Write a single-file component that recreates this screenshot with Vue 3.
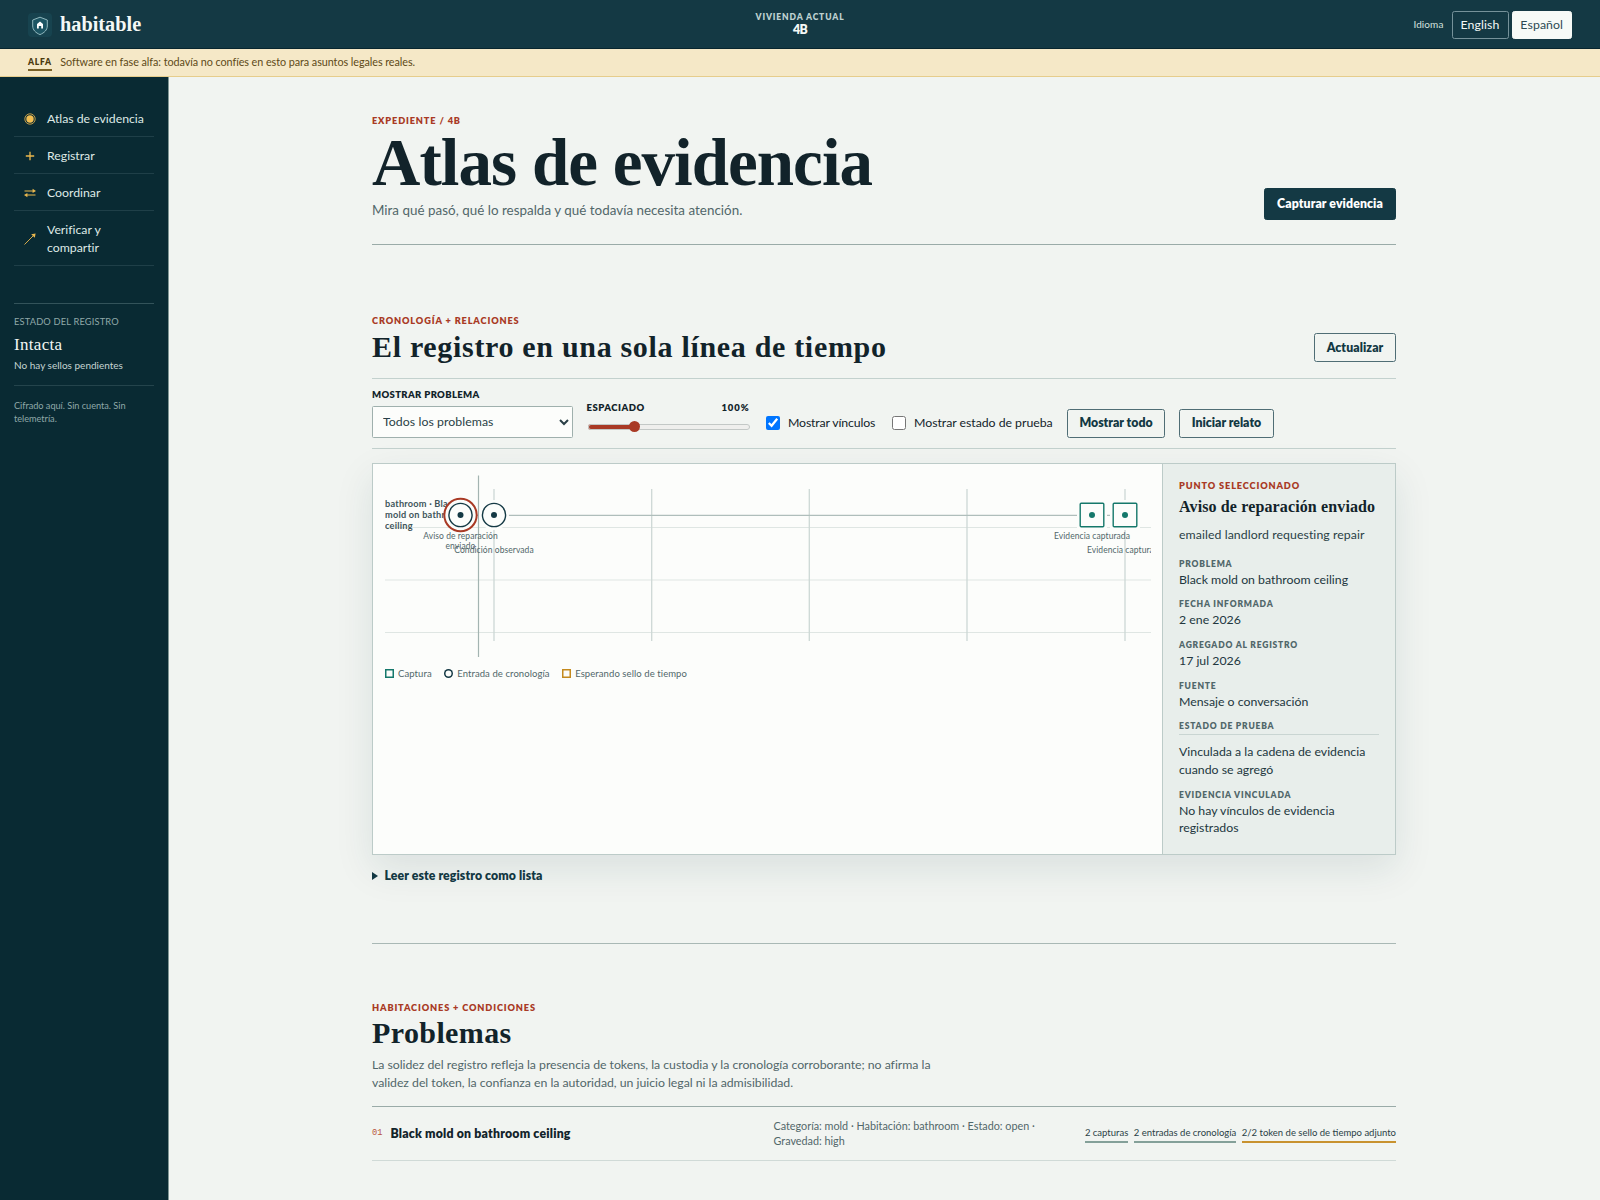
<script setup>
import { ref, computed } from 'vue'

const idioma = ref('es')
const problema = ref('todos')
const espaciado = ref(100)
const verVinculos = ref(true)
const verPrueba = ref(false)

const MIN = 75
const MAX = 165
const relleno = computed(() => ((espaciado.value - MIN) / (MAX - MIN)) * 100 + '%')

const menu = [
  { icono: 'atlas', texto: 'Atlas de evidencia' },
  { icono: 'mas', texto: 'Registrar' },
  { icono: 'flechas', texto: 'Coordinar' },
  { icono: 'salida', texto: 'Verificar y compartir' }
]

// Posiciones dentro del lienzo de la cronología (766 x 184)
const marcas = [109, 266.7, 424.3, 582, 740]
const filas = [52.5, 105, 157.5]
const nodos = [
  { tipo: 'entrada', x: 75.5, y: 40, activo: true, lineas: ['Aviso de reparación', 'enviado'], ty: 63.5 },
  { tipo: 'entrada', x: 109, y: 40, lineas: ['Condición observada'], ty: 78 },
  { tipo: 'captura', x: 707, y: 40, lineas: ['Evidencia capturada'], ty: 63.5 },
  { tipo: 'captura', x: 740, y: 40, lineas: ['Evidencia capturada'], ty: 78 }
]

const leyenda = [
  { clase: 'captura', texto: 'Captura' },
  { clase: 'entrada', texto: 'Entrada de cronología' },
  { clase: 'espera', texto: 'Esperando sello de tiempo' }
]

const detalles = [
  { titulo: 'Problema', valor: 'Black mold on bathroom ceiling' },
  { titulo: 'Fecha informada', valor: '2 ene 2026' },
  { titulo: 'Agregado al registro', valor: '17 jul 2026' },
  { titulo: 'Fuente', valor: 'Mensaje o conversación' },
  { titulo: 'Estado de prueba', valor: 'Vinculada a la cadena de evidencia cuando se agregó', linea: true },
  { titulo: 'Evidencia vinculada', valor: 'No hay vínculos de evidencia registrados' }
]
</script>

<template>
  <div class="app">
    <header class="barra">
      <div class="marca">
        <svg class="logo" viewBox="0 0 24 24" width="24" height="24">
          <rect width="24" height="24" rx="4" fill="#17434f" />
          <path d="M12 4.2 L19.3 7 V13 C19.3 17 16.3 19.8 12 21.6 C7.7 19.8 4.7 17 4.7 13 V7 Z" fill="#1d5563" stroke="#9fc4c8" stroke-width="0.9" stroke-linejoin="round" />
          <path d="M12 8.6 L15 11 V15.4 H13.2 V12.9 H10.8 V15.4 H9 V11 Z" fill="#fff" />
        </svg>
        <span class="nombre">habitable</span>
      </div>
      <div class="vivienda">
        <span>Vivienda actual</span>
        <b>4B</b>
      </div>
      <div class="idiomas">
        <span>Idioma</span>
        <button :class="{ activo: idioma === 'en' }" @click="idioma = 'en'">English</button>
        <button :class="{ activo: idioma === 'es' }" @click="idioma = 'es'">Español</button>
      </div>
    </header>

    <div class="aviso">
      <b>Alfa</b>
      <span>Software en fase alfa: todavía no confíes en esto para asuntos legales reales.</span>
    </div>

    <div class="cuerpo">
      <aside>
        <nav>
          <a v-for="m in menu" :key="m.icono">
            <svg viewBox="0 0 12 12" width="12" height="12" fill="none" stroke="#eab84e">
              <template v-if="m.icono === 'atlas'">
                <circle cx="6" cy="6" r="5.2" stroke-width="0.8" />
                <circle cx="6" cy="6" r="3.7" fill="#f2be52" stroke="none" />
              </template>
              <path v-else-if="m.icono === 'mas'" d="M6 1.8 V10.2 M1.8 6 H10.2" stroke-width="1.3" />
              <g v-else-if="m.icono === 'flechas'">
                <path d="M0.5 4 H9.5 M11.5 8 H2.5" stroke-width="1" />
                <path d="M8.6 1.8 L12 4 L8.6 6 Z M3.4 6 L0 8 L3.4 10.2 Z" fill="#eab84e" stroke="none" />
              </g>
              <g v-else>
                <path d="M0.5 11.5 L10.5 1.5" stroke-width="0.9" />
                <path d="M7.2 1.2 L11.6 0.4 L10.8 4.8 Z" fill="#eab84e" stroke="none" />
              </g>
            </svg>
            <span>{{ m.texto }}</span>
          </a>
        </nav>
        <div class="estado">
          <small>Estado del registro</small>
          <strong>Intacta</strong>
          <span>No hay sellos pendientes</span>
        </div>
        <p class="nota">Cifrado aquí. Sin cuenta. Sin telemetría.</p>
      </aside>

      <main>
        <div class="cabecera">
          <div>
            <p class="rotulo">Expediente / 4B</p>
            <h1>Atlas de evidencia</h1>
            <p class="bajada">Mira qué pasó, qué lo respalda y qué todavía necesita atención.</p>
          </div>
          <button class="boton primario">Capturar evidencia</button>
        </div>

        <section class="cronologia">
          <div class="titulo">
            <div>
              <p class="rotulo">Cronología + relaciones</p>
              <h2>El registro en una sola línea de tiempo</h2>
            </div>
            <button class="boton">Actualizar</button>
          </div>

          <div class="filtros">
            <label class="campo">
              <span>Mostrar problema</span>
              <select v-model="problema">
                <option value="todos">Todos los problemas</option>
              </select>
            </label>
            <label class="rango">
              <span>Espaciado <output>{{ espaciado }}%</output></span>
              <input type="range" :min="MIN" :max="MAX" v-model="espaciado" :style="{ '--relleno': relleno }">
            </label>
            <label class="check">
              <input type="checkbox" v-model="verVinculos"><span>Mostrar vínculos</span>
            </label>
            <label class="check segundo">
              <input type="checkbox" v-model="verPrueba"><span>Mostrar estado de prueba</span>
            </label>
            <button class="boton todo">Mostrar todo</button>
            <button class="boton relato">Iniciar relato</button>
          </div>

          <div class="tablero">
            <div class="lienzo">
              <svg class="mapa" viewBox="0 0 766 184" width="766" height="184">
                <path v-for="y in filas" :key="'f' + y" :d="`M0 ${y} H766`" stroke="#dfe6e3" />
                <path v-for="x in marcas" :key="'m' + x" :d="`M${x} 14 V166`" stroke="#cdd8d5" stroke-width="1.3" />
                <path d="M75.5 40.4 H740" stroke="#afbebb" stroke-width="1.2" />
                <path d="M93.5 0.5 V182" stroke="#a3b4b1" stroke-width="1.2" />
                <text class="fila" x="0" y="32.4">bathroom · Black</text>
                <text class="fila" x="0" y="43.4">mold on bathroom</text>
                <text class="fila" x="0" y="54.4">ceiling</text>
                <g v-for="(n, i) in nodos" :key="i" :class="n.tipo">
                  <template v-if="n.tipo === 'entrada'">
                    <circle :cx="n.x" :cy="n.y" r="15" fill="#fcfdfb" />
                    <circle v-if="n.activo" :cx="n.x" :cy="n.y" r="16.2" fill="#fcfdfb" stroke="#a93a25" stroke-width="2" />
                    <circle class="forma" :cx="n.x" :cy="n.y" r="11.6" />
                  </template>
                  <template v-else>
                    <rect :x="n.x - 15" :y="n.y - 15" width="30" height="30" rx="2" fill="#fcfdfb" />
                    <rect class="forma" :x="n.x - 11.8" :y="n.y - 11.8" width="23.6" height="23.6" rx="1" />
                  </template>
                  <circle class="punto" :cx="n.x" :cy="n.y" r="3" />
                  <text v-for="(l, j) in n.lineas" :key="l" class="nodo" :x="n.x" :y="n.ty + j * 10">{{ l }}</text>
                </g>
              </svg>
              <div class="leyenda">
                <span v-for="l in leyenda" :key="l.clase"><i :class="l.clase"></i>{{ l.texto }}</span>
              </div>
            </div>

            <div class="panel">
              <p class="rotulo">Punto seleccionado</p>
              <h3>Aviso de reparación enviado</h3>
              <p class="texto">emailed landlord requesting repair</p>
              <dl>
                <div v-for="d in detalles" :key="d.titulo" :class="{ linea: d.linea }">
                  <dt>{{ d.titulo }}</dt>
                  <dd>{{ d.valor }}</dd>
                </div>
              </dl>
            </div>
          </div>

          <div class="lista">
            <svg viewBox="0 0 6 8" width="6" height="8"><path d="M0 0 L6 4 L0 8 Z" fill="#123843" /></svg>
            <span>Leer este registro como lista</span>
          </div>
        </section>

        <section class="problemas">
          <p class="rotulo">Habitaciones + condiciones</p>
          <h2>Problemas</h2>
          <p class="intro">La solidez del registro refleja la presencia de tokens, la custodia y la cronología corroborante; no afirma la validez del token, la confianza en la autoridad, un juicio legal ni la admisibilidad.</p>
          <div class="fila-problema">
            <div class="asunto"><code>01</code><b>Black mold on bathroom ceiling</b></div>
            <p>Categoría: mold · Habitación: bathroom · Estado: open · Gravedad: high</p>
            <div class="sellos">
              <span>2 capturas</span>
              <span>2 entradas de cronología</span>
              <span class="token">2/2 token de sello de tiempo adjunto</span>
            </div>
          </div>
        </section>
      </main>
    </div>
  </div>
</template>

<style>
body { background: #f1f4f1; overflow: hidden; }
</style>

<style scoped>
* { box-sizing: border-box; }
p, h1, h2, h3, dl, dd { margin: 0; }
.app { height: 1200px; overflow: hidden; display: flex; flex-direction: column; background: #f1f4f1; color: #12232a; font-family: Lato, "Liberation Sans", sans-serif; font-size: 12.3px; }
h1, h2, h3, .nombre, .estado strong { font-family: "Liberation Serif", "Times New Roman", serif; }
button { font-family: inherit; cursor: pointer; }

/* Barra superior */
.barra { flex: none; height: 49px; padding: 0 28px; display: grid; grid-template-columns: 1fr auto 1fr; align-items: center; background: #143944; border-bottom: 1px solid #08262f; color: #f4f8f6; }
.marca { display: flex; align-items: center; gap: 8px; padding-top: 1px; }
.nombre { font-size: 20.3px; font-weight: 700; line-height: 24px; padding-bottom: 2px; }
.vivienda { display: flex; flex-direction: column; align-items: center; padding-bottom: 1.5px; }
.vivienda span { font-size: 8.5px; font-weight: 800; line-height: 12px; letter-spacing: 0.88px; text-transform: uppercase; color: #bdd0cf; }
.vivienda b { font-size: 12.3px; font-weight: 800; line-height: 13px; letter-spacing: -0.7px; }
.idiomas { display: flex; align-items: center; justify-content: flex-end; padding-top: 1px; }
.idiomas span { font-size: 10px; letter-spacing: 0.1px; margin-right: 8px; padding-bottom: 1px; color: #d5e1df; }
.idiomas button { height: 28px; width: 57px; padding: 0 0 1px; border: 1px solid #76929a; border-radius: 2.5px; background: transparent; color: #f4f8f6; font-size: 12.3px; letter-spacing: 0.1px; }
.idiomas button + button { margin-left: 3px; width: 60.5px; }
.idiomas .activo { background: #f6faf7; border-color: #f6faf7; color: #2b4a53; }

.aviso { flex: none; height: 28px; padding: 0 28px 2px; display: flex; align-items: center; gap: 8.5px; background: #f5e8c7; border-bottom: 1px solid #e6cd8c; color: #5e4a17; font-size: 10.8px; letter-spacing: -0.06px; }
.aviso b { font-size: 8.5px; font-weight: 800; letter-spacing: 0.75px; line-height: 13px; text-transform: uppercase; border-bottom: 2px solid #7a6126; color: #4a3a0f; margin-top: 4px; }

/* Menú lateral */
.cuerpo { flex: 1; display: flex; }
aside { flex: none; width: 169px; padding: 23px 14px; background: #092a33; border-right: 1px solid #7f9694; color: #dfe9e6; }
nav a { display: flex; align-items: center; gap: 11px; padding: 10px 10px 8px; border-bottom: 1px solid #1f3f48; line-height: 18px; letter-spacing: -0.02px; }
nav svg { flex: none; }
.estado { margin-top: 37px; padding: 11px 0 13px; border-top: 1px solid #33535a; border-bottom: 1px solid #24444c; display: flex; flex-direction: column; }
.estado small { font-size: 9.3px; line-height: 14px; letter-spacing: 0.15px; text-transform: uppercase; color: #8fa8a8; }
.estado strong { font-size: 17px; font-weight: 400; line-height: 22px; margin-top: 5px; letter-spacing: 0.3px; color: #f1f6f4; }
.estado span { font-size: 10px; line-height: 14px; margin-top: 2px; color: #c5d4d2; }
.nota { margin-top: 13px; font-size: 9.2px; line-height: 13px; letter-spacing: -0.03px; color: #8fa8a8; }

/* Contenido */
main { width: 1024px; margin-left: 203px; padding-top: 36.5px; }
.rotulo { font-size: 9.2px; font-weight: 800; line-height: 14px; letter-spacing: 0.86px; text-transform: uppercase; color: #a93a25; }
.cabecera { display: flex; justify-content: space-between; align-items: flex-end; padding-bottom: 24px; border-bottom: 1px solid #9aaba8; }
h1 { margin-top: 1px; font-size: 67px; line-height: 66px; letter-spacing: -0.96px; }
.bajada { margin-top: 5.5px; font-size: 13.4px; line-height: 20px; letter-spacing: 0.02px; color: #51676a; }
.boton { height: 29px; padding: 0 0 1px; border: 1px solid #4f6d75; border-radius: 2.5px; background: transparent; color: #123843; font-size: 12.3px; font-weight: 800; }
.primario { width: 132px; height: 32.5px; background: #143944; border-color: #143944; color: #fff; letter-spacing: 0.1px; }

.cronologia { padding: 69px 0 57.5px; border-bottom: 1px solid #a9b8b5; }
.titulo { display: flex; justify-content: space-between; align-items: flex-end; padding-bottom: 14px; border-bottom: 1px solid #c3d1ce; }
h2 { font-size: 30px; line-height: 34px; margin-top: 2px; letter-spacing: 0.68px; }
.titulo .boton { width: 82px; margin-bottom: 2px; letter-spacing: 0.08px; }

.filtros { height: 70px; padding-bottom: 10.5px; display: flex; align-items: flex-end; gap: 14px; border-bottom: 1px solid #c3d1ce; }
.campo, .rango { display: flex; flex-direction: column; }
.campo span, .rango span { font-size: 9.5px; font-weight: 800; line-height: 14px; letter-spacing: 0.36px; text-transform: uppercase; }
.campo select { width: 200.5px; height: 32px; margin-top: 4px; padding: 0 0 1px 6px; border: 1px solid #9fb0ad; border-radius: 1.5px; background: #fcfdfb; color: #2a3f46; font-family: inherit; font-size: 12.3px; letter-spacing: 0.06px; }
.rango { width: 163px; height: 37px; }
.rango span { display: flex; justify-content: space-between; letter-spacing: 0.5px; }
.rango output { letter-spacing: 0.9px; }
.rango input { appearance: none; width: 162px; height: 12px; margin: 6px 0 0 1px; background: transparent; }
.rango input::-webkit-slider-runnable-track { height: 6px; border-radius: 3px; box-shadow: inset 0 0 0 1px #c3c8c6; background: linear-gradient(#a93a25, #a93a25) 0 0 / var(--relleno) 100% no-repeat, #efefed; }
.rango input::-webkit-slider-thumb { appearance: none; width: 11px; height: 11px; margin-top: -2.5px; border-radius: 50%; background: #a93a25; }
.check { height: 30px; display: flex; align-items: center; margin-left: 2.5px; }
.check input { width: 14px; height: 14px; margin: 0 8px 0 0; }
.check span { width: 87.5px; white-space: nowrap; letter-spacing: -0.15px; padding-bottom: 1px; }
.check.segundo span { width: 139px; letter-spacing: -0.03px; }
.todo { width: 98px; }
.relato { width: 95px; }

.tablero { margin-top: 14px; height: 392px; display: grid; grid-template-columns: 1fr 233px; border: 1px solid #bccbc8; background: #fcfdfb; box-shadow: 0 14px 36px rgba(18, 56, 67, 0.1); }
.lienzo { padding: 11px 11px 0 12px; }
.mapa { display: block; overflow: hidden; }
.mapa text { fill: #51676a; font-size: 8.5px; letter-spacing: 0.07px; }
.mapa .fila { font-size: 9.2px; font-weight: 700; letter-spacing: 0.22px; fill: #40555a; }
.mapa .nodo { text-anchor: middle; }
.forma { fill: #fcfdfb; stroke-width: 1.4; }
.entrada .forma { stroke: #143944; }
.entrada .punto { fill: #143944; }
.captura .forma { stroke: #15786b; }
.captura .punto { fill: #15786b; }
.leyenda { display: flex; gap: 12.5px; margin-top: 7.5px; font-size: 9.5px; line-height: 14px; letter-spacing: 0.08px; color: #51676a; }
.leyenda span { display: flex; align-items: center; }
.leyenda i { width: 9px; height: 9px; margin-right: 4px; box-shadow: inset 0 0 0 1.5px #15786b; }
.leyenda .entrada { box-shadow: inset 0 0 0 1.5px #143944; border-radius: 50%; }
.leyenda .espera { box-shadow: inset 0 0 0 1.5px #c48a1e; }

.panel { padding: 15px 16px 0; border-left: 1px solid #bccbc8; background: #e8eeeb; }
h3 { margin-top: 3.5px; font-size: 16px; line-height: 20px; letter-spacing: 0.13px; white-space: nowrap; }
.texto { margin-top: 9px; line-height: 18px; letter-spacing: 0.07px; color: #2a3f46; }
dl { margin-top: 14px; display: flex; flex-direction: column; gap: 10px; }
dt { font-size: 8.5px; font-weight: 800; line-height: 12px; letter-spacing: 0.8px; text-transform: uppercase; color: #51676a; }
dd { margin-top: 1px; line-height: 17.7px; color: #22373e; }
.linea dd { margin-top: 2px; padding-top: 8px; border-top: 1px solid #c9d5d2; }

.lista { margin-top: 12px; display: flex; align-items: center; gap: 6.5px; line-height: 18px; font-weight: 800; letter-spacing: 0.09px; color: #123843; }

.problemas { padding-top: 57px; }
.problemas h2 { margin-top: 1.5px; letter-spacing: 0.4px; }
.intro { margin-top: 6px; width: 575px; line-height: 17.5px; letter-spacing: -0.03px; color: #51676a; }
.fila-problema { margin-top: 14.5px; height: 55.5px; display: grid; grid-template-columns: 401.5px 270px 1fr; align-items: center; border-top: 1px solid #9aaba8; border-bottom: 1px solid #d0dad7; }
.asunto { display: flex; align-items: center; gap: 8px; }
.asunto code { font: 8.7px "Liberation Mono", monospace; color: #b8543f; }
.asunto b { font-weight: 800; letter-spacing: 0.2px; }
.fila-problema p { font-size: 10.8px; line-height: 15.3px; color: #51676a; }
.sellos { display: flex; justify-content: flex-end; gap: 5.5px; font-size: 9.5px; line-height: 17px; white-space: nowrap; color: #2a3f46; }
.sellos span { border-bottom: 2px solid #84a099; }
.sellos .token { border-color: #c8922f; }
</style>
